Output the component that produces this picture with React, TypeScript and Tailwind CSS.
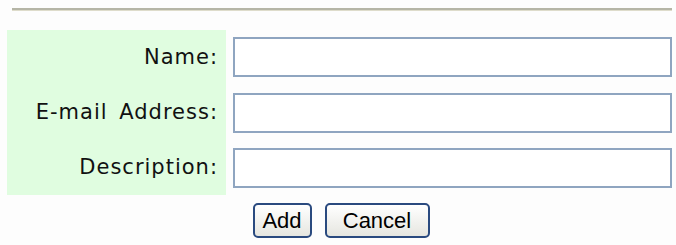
import React from "react";

const labelCls =
  "h-[55px] bg-[#e0fde0] flex items-center justify-end pr-[8px] text-[21px] tracking-[1px] [word-spacing:4px] text-[#111]";
const inputCls =
  "h-[40px] w-full border-2 border-[#8fa5c0] bg-white outline-none";

export default function App() {
  return (
    <div className="w-[676px] h-[245px] bg-[#fdfdfd] overflow-hidden" style={{ fontFamily: '"DejaVu Sans", Verdana, sans-serif' }}>
      <div className="pt-[8px] pl-[12px] pr-[4px]">
        <div className="h-[3px] bg-[#b5b5a6] border-b border-[#dedccb]" />
      </div>
      <div className="mt-[19px] ml-[7px] mr-[4px] grid grid-cols-[219px_1fr]">
        <div className={labelCls}>Name:</div>
        <div className="h-[55px] pl-[7px] pt-[7px]">
          <input className={inputCls} />
        </div>
        <div className={labelCls}>E-mail Address:</div>
        <div className="h-[55px] pl-[7px] pt-[8px]">
          <input className={inputCls} />
        </div>
        <div className={labelCls}>Description:</div>
        <div className="h-[55px] pl-[7px] pt-[8px]">
          <input className={inputCls} />
        </div>
      </div>
      <div className="mt-[8px] flex justify-center gap-[13px] pl-[6px]">
        <button
          className="w-[59px] h-[35px] rounded-[5px] border-2 border-[#2a4a7f] bg-gradient-to-b from-white to-[#e6e6e0] text-[22px] text-black flex items-center justify-center"
          style={{ fontFamily: '"Liberation Sans", Tahoma, sans-serif' }}
        >
          Add
        </button>
        <button
          className="w-[105px] h-[35px] rounded-[5px] border-2 border-[#2a4a7f] bg-gradient-to-b from-white to-[#e6e6e0] text-[22px] text-black flex items-center justify-center"
          style={{ fontFamily: '"Liberation Sans", Tahoma, sans-serif' }}
        >
          Cancel
        </button>
      </div>
    </div>
  );
}
